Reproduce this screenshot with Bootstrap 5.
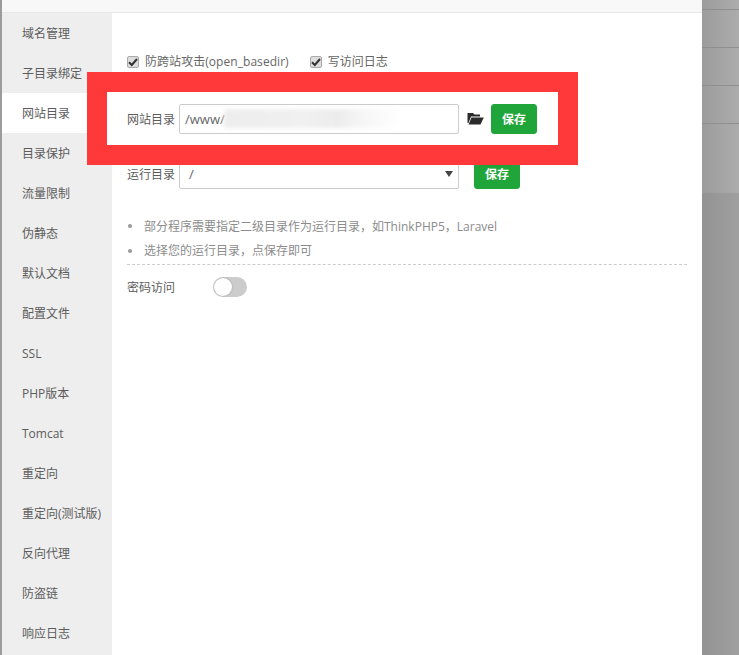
<!DOCTYPE html>
<html lang="zh-CN">
<head>
<meta charset="utf-8">
<title>网站目录</title>
<link href="https://cdn.jsdelivr.net/npm/bootstrap@5.3.0/dist/css/bootstrap.min.css" rel="stylesheet">
<style>
html,body{height:655px;overflow:hidden;}
body{font-family:"Open Sans","Noto Sans CJK SC",sans-serif;font-size:12px;color:#666;background:#fff;line-height:1.5;}
.page-shell{height:655px;position:relative;}
.edge-strip{width:2px;background:#9c9c9c;}
.panel-wrap{width:700px;}
.top-strip{height:13px;background:#f8f8f8;border-bottom:1px solid #e8e8e8;}
.side-menu{width:110px;background:#eee;}
.side-item{height:40px;line-height:42px;padding-left:20px;color:#5c5c5c;white-space:nowrap;}
.side-item.is-on{background:#fff;}
.main-pane{padding:35px 15px 0 15px;}
.check-row{height:26px;gap:21px;color:#666;padding-top:2px;}
.fake-check{width:12px;height:12px;background:#ddd;border:1px solid #aaa;border-radius:2px;margin-right:6px;display:inline-flex;align-items:center;justify-content:center;}
.check-txt{letter-spacing:.05px;}
.field-row{height:30px;}
.field-label{width:52px;color:#5c5c5c;padding-top:2px;}
.path-box{width:280px;height:30px;border:1px solid #ccc;border-radius:2px;padding-left:5px;color:#666;line-height:29px;position:relative;overflow:hidden;background:#fff;font-size:13px;}
.smudge{position:absolute;left:44px;top:4px;width:176px;height:19px;background:linear-gradient(90deg,#ededed 0%,#f0f0f0 45%,#ececec 65%,#f4f4f4 75%,#fff 100%);filter:blur(2px);}
.folder-ico{margin:0 7px 0 8px;}
.save-btn{width:46px;height:30px;padding:1px 0 0;background:#20a53a;border:1px solid #20a53a;border-radius:3px;color:#fff;font-size:12px;font-weight:700;line-height:27px;}
.select-box{width:280px;height:30px;border:1px solid #ccc;border-radius:2px;padding-left:9px;color:#666;line-height:28px;position:relative;font-size:13px;margin-right:15px;}
.select-box::after{content:"";position:absolute;right:5px;top:11px;border-left:4px solid transparent;border-right:4px solid transparent;border-top:6px solid #444;}
.first-field{margin-top:17px;}
.second-field{margin-top:38px;}
.tips{margin:25px 0 0 0;padding:0;color:#8c8c8c;list-style:none;}
.tips li{line-height:25px;height:24.5px;display:flex;align-items:center;}
.tips li::before{content:"";width:4px;height:4px;border-radius:50%;background:#999;margin:0 12px 0 1px;flex:none;}
.dash-rule{border-top:1px dashed #ccc;margin-top:1px;}
.pw-row{margin-top:12px;height:20px;}
.pw-label{width:86px;color:#5c5c5c;padding-top:2px;}
.switch-track{width:34px;height:20px;border-radius:10px;background:#ccc;position:relative;display:block;}
.switch-track::after{content:"";position:absolute;left:1px;top:1px;width:18px;height:18px;border-radius:50%;background:#fff;box-shadow:0 0 2px rgba(0,0,0,.25);}
.shade-bar{height:38px;border-bottom:1px solid #8f8f8f;background:linear-gradient(90deg,#9c9c9c,#acacac);}
.shade-bar:first-child{height:10px;}
.shade-low{height:69px;background:linear-gradient(90deg,#9c9c9c,#acacac);}
.shade-rest{background:linear-gradient(90deg,#939393,#9f9f9f);}
.red-frame{position:absolute;left:87px;top:72px;width:491px;height:93px;border:20px solid #ff3939;background:#fff;display:flex;align-items:center;}
.red-frame .field-label{margin-left:20px;}
</style>
</head>
<body>
<div class="page-shell d-flex">
  <div class="edge-strip"></div>
  <div class="panel-wrap d-flex flex-column">
    <div class="top-strip"></div>
    <div class="d-flex flex-grow-1">
      <nav class="side-menu d-flex flex-column">
        <div class="side-item">域名管理</div>
        <div class="side-item">子目录绑定</div>
        <div class="side-item is-on">网站目录</div>
        <div class="side-item">目录保护</div>
        <div class="side-item">流量限制</div>
        <div class="side-item">伪静态</div>
        <div class="side-item">默认文档</div>
        <div class="side-item">配置文件</div>
        <div class="side-item">SSL</div>
        <div class="side-item">PHP版本</div>
        <div class="side-item">Tomcat</div>
        <div class="side-item">重定向</div>
        <div class="side-item">重定向(测试版)</div>
        <div class="side-item">反向代理</div>
        <div class="side-item">防盗链</div>
        <div class="side-item">响应日志</div>
      </nav>
      <main class="main-pane flex-grow-1">
        <div class="check-row d-flex align-items-center">
          <label class="d-inline-flex align-items-center"><span class="fake-check"><svg width="10" height="10" viewBox="0 0 10 10"><path d="M1 5.2 L3.8 8 L9 2" fill="none" stroke="#333" stroke-width="2"/></svg></span><span class="check-txt">防跨站攻击(open_basedir)</span></label>
          <label class="d-inline-flex align-items-center"><span class="fake-check"><svg width="10" height="10" viewBox="0 0 10 10"><path d="M1 5.2 L3.8 8 L9 2" fill="none" stroke="#333" stroke-width="2"/></svg></span>写访问日志</label>
        </div>
        <div class="first-field field-row invisible"></div>
        <div class="second-field field-row d-flex align-items-center">
          <span class="field-label">运行目录</span>
          <div class="select-box">/</div>
          <button type="button" class="btn save-btn">保存</button>
        </div>
        <ul class="tips">
          <li>部分程序需要指定二级目录作为运行目录，如ThinkPHP5，Laravel</li>
          <li>选择您的运行目录，点保存即可</li>
        </ul>
        <div class="dash-rule"></div>
        <div class="pw-row d-flex align-items-center">
          <span class="pw-label">密码访问</span>
          <span class="switch-track"></span>
        </div>
      </main>
    </div>
  </div>
  <div class="flex-grow-1 d-flex flex-column">
    <div class="shade-bar"></div>
    <div class="shade-bar"></div>
    <div class="shade-bar"></div>
    <div class="shade-bar"></div>
    <div class="shade-low"></div>
    <div class="shade-rest flex-grow-1"></div>
  </div>
  <div class="red-frame">
    <span class="field-label">网站目录</span>
    <div class="path-box">/www/<span class="smudge"></span></div>
    <svg class="folder-ico" width="17" height="13" viewBox="0 0 17 13"><path d="M0.5 1h5.5l1.5 1.5h5.5v2H4L1.5 11 0.5 11z M4.5 5.5H16.8L13.5 12.5H1.5z" fill="#2b2b2b"/></svg>
    <button type="button" class="btn save-btn">保存</button>
  </div>
</div>
<script src="https://cdn.jsdelivr.net/npm/bootstrap@5.3.0/dist/js/bootstrap.bundle.min.js"></script>
</body>
</html>
